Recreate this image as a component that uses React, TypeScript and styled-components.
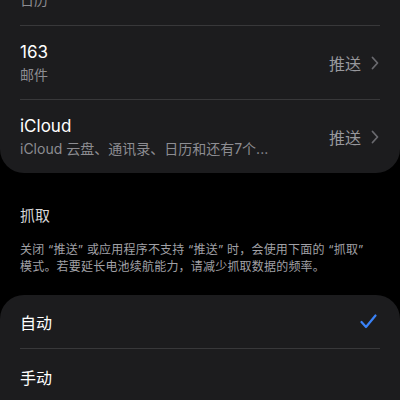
import React from "react";
import styled, { createGlobalStyle } from "styled-components";

const GlobalStyle = createGlobalStyle`
  html, body {
    margin: 0;
    padding: 0;
    background: #000;
  }
  body {
    font-family: "Inter", "Noto Sans CJK SC", sans-serif;
    -webkit-font-smoothing: antialiased;
  }
`;

const Page = styled.div`
  width: 400px;
  height: 400px;
  overflow: hidden;
  background: #000;
`;

const Scroller = styled.div`
  margin-top: -49px;
  display: flex;
  flex-direction: column;
`;

const Card = styled.div`
  background: #1c1c1e;
  border-radius: 24px;
  display: flex;
  flex-direction: column;
`;

const Row = styled.div<{ $first?: boolean; $height: number }>`
  margin: 0 20px;
  height: ${({ $height }) => $height}px;
  display: flex;
  align-items: center;
  justify-content: space-between;
  border-top: ${({ $first }) => ($first ? "none" : "1px solid #38383a")};
  box-sizing: border-box;
`;

const Texts = styled.div`
  display: flex;
  flex-direction: column;
  gap: 2px;
  min-width: 0;
`;

const Title = styled.div`
  font-size: 17px;
  line-height: 22px;
  color: #fff;
`;

const Subtitle = styled.div`
  font-size: 14px;
  line-height: 20px;
  color: #8d8d92;
  white-space: nowrap;
`;

const Trailing = styled.div`
  display: flex;
  align-items: center;
  gap: 10px;
  flex-shrink: 0;
  margin-right: 1px;
`;

const Value = styled.span`
  font-size: 16px;
  color: #98989d;
`;

const OptionLabel = styled.span`
  font-size: 16px;
  color: #fff;
`;

const CheckWrap = styled.span`
  display: flex;
  margin-right: 3px;
`;

const SectionHeader = styled.div`
  margin: 33px 20px 0;
  font-size: 15px;
  line-height: 20px;
  color: #d6d6d8;
`;

const Footnote = styled.p`
  margin: 15px 30px 20px 20px;
  font-size: 12px;
  line-height: 17px;
  letter-spacing: 0.2px;
  color: #a1a1a6;
`;

const Chevron = () => (
  <svg width="8" height="14" viewBox="0 0 8 14" fill="none">
    <path d="M1.5 1.5 L6.5 7 L1.5 12.5" stroke="#69696e" strokeWidth="1.8" strokeLinecap="round" strokeLinejoin="round" />
  </svg>
);

const Check = () => (
  <svg width="17" height="15" viewBox="0 0 17 15" fill="none">
    <path d="M1.5 8 L6 13 L15.5 1.5" stroke="#3a82f7" strokeWidth="2.2" strokeLinecap="round" strokeLinejoin="round" />
  </svg>
);

const accounts = [
  { title: "日历账户", subtitle: "日历" },
  { title: "163", subtitle: "邮件" },
  { title: "iCloud", subtitle: "iCloud 云盘、通讯录、日历和还有7个..." },
];

const App: React.FC = () => (
  <>
    <GlobalStyle />
    <Page>
      <Scroller>
        <Card>
          {accounts.map((a, i) => (
            <Row key={a.title} $first={i === 0} $height={74}>
              <Texts>
                <Title>{a.title}</Title>
                <Subtitle>{a.subtitle}</Subtitle>
              </Texts>
              <Trailing>
                <Value>推送</Value>
                <Chevron />
              </Trailing>
            </Row>
          ))}
        </Card>
        <SectionHeader>抓取</SectionHeader>
        <Footnote>
          关闭 “推送” 或应用程序不支持 “推送” 时，会使用下面的 “抓取” 模式。若要延长电池续航能力，请减少抓取数据的频率。
        </Footnote>
        <Card>
          <Row $first $height={53}>
            <OptionLabel>自动</OptionLabel>
            <CheckWrap>
              <Check />
            </CheckWrap>
          </Row>
          <Row $height={56}>
            <OptionLabel>手动</OptionLabel>
          </Row>
          <Row $height={54}>
            <OptionLabel>每15分钟</OptionLabel>
          </Row>
        </Card>
      </Scroller>
    </Page>
  </>
);

export default App;
